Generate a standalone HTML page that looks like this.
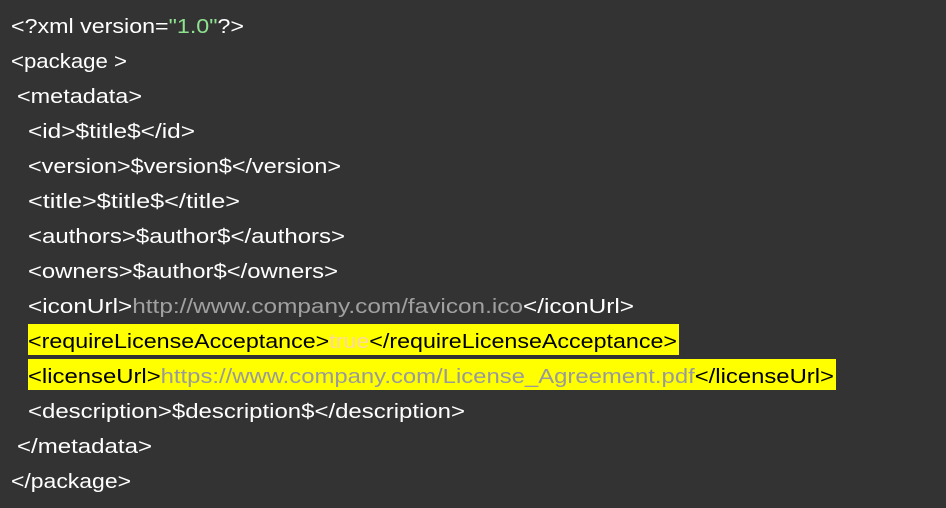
<!DOCTYPE html>
<html><head><meta charset="utf-8"><style>
html,body{margin:0;padding:0;background:#333333;width:946px;height:508px;overflow:hidden}
svg{display:block}
text{font-family:"Liberation Sans",sans-serif;font-size:20px;fill:#ffffff}
</style></head><body>
<svg width="946" height="508" viewBox="0 0 946 508">
<rect x="0" y="0" width="946" height="508" fill="#333333"/>
<rect x="28" y="324" width="651" height="31" fill="#ffff00"/>
<rect x="28" y="359" width="808" height="31" fill="#ffff00"/>
<text x="11" y="33" textLength="233" lengthAdjust="spacingAndGlyphs">&lt;?xml version=<tspan fill="#8fe08f">"1.0"</tspan>?&gt;</text>
<text x="11" y="68" textLength="116" lengthAdjust="spacingAndGlyphs">&lt;package &gt;</text>
<text x="17" y="103" textLength="125" lengthAdjust="spacingAndGlyphs">&lt;metadata&gt;</text>
<text x="28" y="138" textLength="167" lengthAdjust="spacingAndGlyphs">&lt;id&gt;$title$&lt;/id&gt;</text>
<text x="28" y="173" textLength="313" lengthAdjust="spacingAndGlyphs">&lt;version&gt;$version$&lt;/version&gt;</text>
<text x="28" y="208" textLength="212" lengthAdjust="spacingAndGlyphs">&lt;title&gt;$title$&lt;/title&gt;</text>
<text x="28" y="243" textLength="317" lengthAdjust="spacingAndGlyphs">&lt;authors&gt;$author$&lt;/authors&gt;</text>
<text x="28" y="278" textLength="310" lengthAdjust="spacingAndGlyphs">&lt;owners&gt;$author$&lt;/owners&gt;</text>
<text x="28" y="313" textLength="606" lengthAdjust="spacingAndGlyphs">&lt;iconUrl&gt;<tspan fill="#a0a0a0">http://www.company.com/favicon.ico</tspan>&lt;/iconUrl&gt;</text>
<text x="28" y="348" textLength="649" lengthAdjust="spacingAndGlyphs" style="fill:#000">&lt;requireLicenseAcceptance&gt;<tspan fill="#ffd8a0">true</tspan>&lt;/requireLicenseAcceptance&gt;</text>
<text x="28" y="383" textLength="806" lengthAdjust="spacingAndGlyphs" style="fill:#000">&lt;licenseUrl&gt;<tspan fill="#9a9a9a">https://www.company.com/License_Agreement.pdf</tspan>&lt;/licenseUrl&gt;</text>
<text x="28" y="418" textLength="437" lengthAdjust="spacingAndGlyphs">&lt;description&gt;$description$&lt;/description&gt;</text>
<text x="17" y="453" textLength="135" lengthAdjust="spacingAndGlyphs">&lt;/metadata&gt;</text>
<text x="11" y="488" textLength="120" lengthAdjust="spacingAndGlyphs">&lt;/package&gt;</text>
</svg>
</body></html>
